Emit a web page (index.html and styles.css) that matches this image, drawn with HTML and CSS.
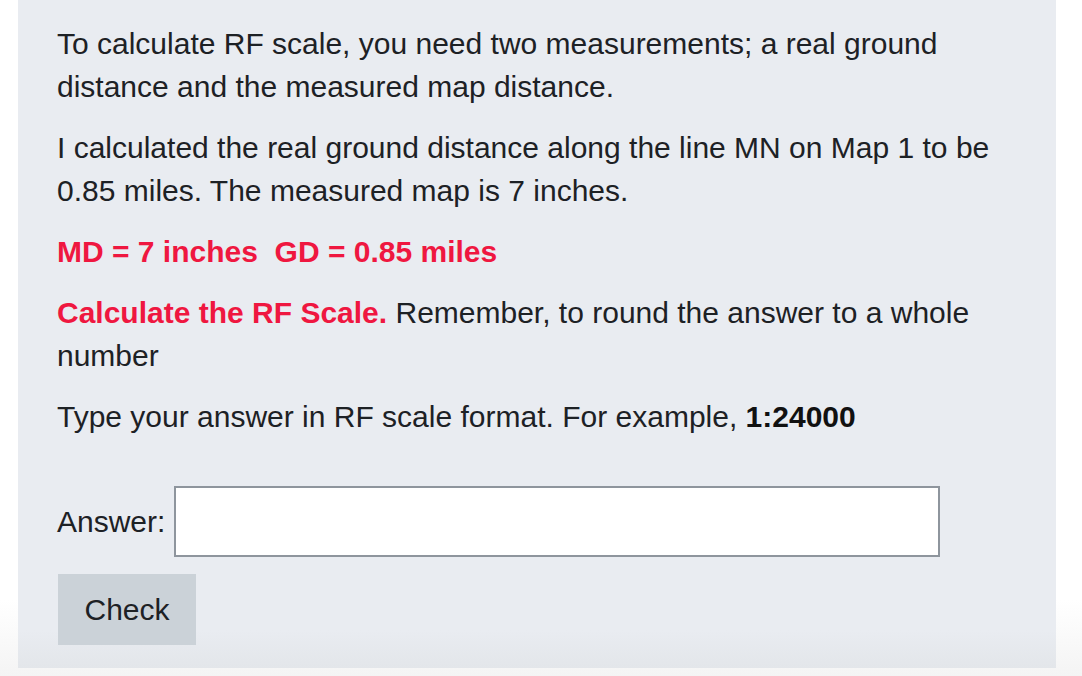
FILE: index.html
```html
<!DOCTYPE html>
<html>
<head>
<meta charset="utf-8">
<link rel="stylesheet" href="styles.css">
</head>
<body>
<div class="panel">
  <p>To calculate RF scale, you need two measurements; a real ground distance and the measured map distance.</p>
  <p>I calculated the real ground distance along the line MN on Map 1 to be 0.85 miles. The measured map is 7 inches.</p>
  <p class="red">MD = 7 inches&nbsp; GD = 0.85 miles</p>
  <p><strong class="red">Calculate the RF Scale.</strong> Remember, to round the answer to a whole number</p>
  <p>Type your answer in RF scale format. For example, <b>1:24000</b></p>
  <div class="answer">
    <label for="ans">Answer:</label>
    <input id="ans" type="text">
  </div>
  <button class="check">Check</button>
</div>
</body>
</html>
```

FILE: styles.css
```css
html, body {
  margin: 0;
  padding: 0;
  background: #ffffff;
}
body {
  font-family: "Liberation Sans", Arial, Helvetica, sans-serif;
  font-size: 30px;
  line-height: 43px;
  color: #1d2125;
  height: 676px;
  background: linear-gradient(to bottom, #ffffff 0, #ffffff 600px, #f4f4f4 676px);
}
.panel {
  margin-left: 18px;
  width: 1038px;
  height: 668px;
  box-sizing: border-box;
  padding: 22px 39px 0 39px;
  background: linear-gradient(to bottom, #e9ecf1 0, #e9ecf1 630px, #e3e6ea 668px);
}
p {
  margin: 0 0 18px 0;
  max-width: 960px;
}
.red {
  color: #ef1740;
  font-weight: bold;
}
b {
  font-weight: bold;
  color: #111;
}
.answer {
  display: flex;
  align-items: center;
  gap: 9px;
  margin-top: 48px;
}
.answer input {
  width: 766px;
  height: 71px;
  box-sizing: border-box;
  border: 2px solid #8e959d;
  background: #fff;
  font: inherit;
  padding: 0 12px;
  margin: 0;
}
.check {
  margin-top: 17px;
  margin-left: 1px;
  width: 138px;
  height: 71px;
  border: none;
  background: #cbd2d8;
  color: #1d2125;
  font-family: inherit;
  font-size: 30px;
  padding: 0;
}
```
